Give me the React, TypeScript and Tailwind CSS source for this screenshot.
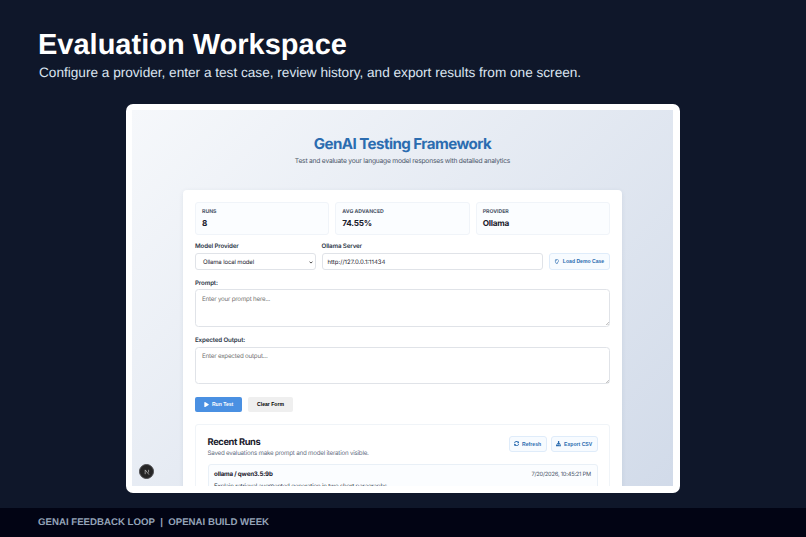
import type { ReactNode } from "react";
import { FaDownload, FaPlay, FaRegLightbulb, FaSyncAlt } from "react-icons/fa";

const stats = [
  { label: "RUNS", value: "8" },
  { label: "AVG ADVANCED", value: "74.55%" },
  { label: "PROVIDER", value: "Ollama" },
];

function StatCard({ label, value }: { label: string; value: string }) {
  return (
    <div className="h-[32.5px] rounded-[3px] border border-[#f0f4f9] bg-[#fbfdff] px-[6px] pt-[6px]">
      <div className="text-[5.2px] leading-[7px] font-bold tracking-[-0.02px] text-[#4a5568]">{label}</div>
      <div className="mt-[1.5px] text-[8.2px] leading-[10px] font-bold tracking-[-0.25px] text-[#1a202c]">
        {value}
      </div>
    </div>
  );
}

function FieldLabel({ children }: { children: ReactNode }) {
  return (
    <div className="pt-px text-[6.2px] leading-[7px] font-semibold tracking-[-0.13px] text-[#2d3748]">
      {children}
    </div>
  );
}

function GhostButton({ className, children }: { className: string; children: ReactNode }) {
  return (
    <button
      className={`flex items-center justify-center rounded-[3px] border border-[#dfecfa] bg-[#f7fbff] font-['Liberation_Sans',sans-serif] text-[5.1px] leading-[7px] font-bold whitespace-nowrap text-[#2b6cb0] ${className}`}
    >
      {children}
    </button>
  );
}

function TextBox({ label, hint }: { label: string; hint: string }) {
  return (
    <div>
      <FieldLabel>{label}</FieldLabel>
      <div className="relative mt-[2.5px] h-[37.5px] rounded-[3.5px] border border-[#e0e3e8] bg-white px-[6px] pt-[5.5px] text-[6.2px] leading-[8px] tracking-[-0.19px] text-[#6f6f6f]">
        {hint}
        <svg className="absolute right-[0.5px] bottom-[0.5px] h-[3px] w-[3px]" viewBox="0 0 3 3">
          <path d="M3 0L0 3M3 1.6L1.6 3" stroke="#888" strokeWidth="0.5" />
        </svg>
      </div>
    </div>
  );
}

function Screen() {
  return (
    <div className="relative h-[376px] w-[541px] overflow-hidden bg-linear-[135deg,#f6f8fb,#c3cfe2] bg-[length:100%_740px] font-['Inter',sans-serif]">
      <h1 className="pt-[24px] text-center text-[15.1px] leading-[20px] font-bold tracking-[-0.54px] text-[#2b6cb0]">
        GenAI Testing Framework
      </h1>
      <p className="mt-[3px] text-center text-[6.7px] leading-[9px] tracking-[-0.22px] text-[#4a5568]">
        Test and evaluate your language model responses with detailed analytics
      </p>

      <div className="mt-[24px] ml-[51px] h-[400px] w-[439px] rounded-[4px] bg-white px-[12px] pt-[12px] shadow-[0_1px_5px_rgba(30,50,90,0.08)]">
        <div className="grid grid-cols-3 gap-[6px]">
          {stats.map((s) => (
            <StatCard key={s.label} label={s.label} value={s.value} />
          ))}
        </div>

        {/* Provider row */}
        <div className="mt-[7.5px] flex items-end gap-[6px]">
          <div className="w-[120.5px]">
            <FieldLabel>Model Provider</FieldLabel>
            <div className="mt-[3px] flex h-[17px] items-center justify-between rounded-[3px] border border-[#e0e3e8] pt-px pr-[1.5px] pl-[7px] text-[6px] tracking-[-0.15px] text-[#1a202c]">
              Ollama local model
              <svg className="h-[3px] w-[4px]" viewBox="0 0 4 3">
                <path d="M0.5 0.6L2 2.1L3.5 0.6" fill="none" stroke="#222" strokeWidth="0.8" />
              </svg>
            </div>
          </div>
          <div className="flex-1">
            <FieldLabel>Ollama Server</FieldLabel>
            <div className="mt-[3px] flex h-[17px] items-center rounded-[3px] border border-[#e0e3e8] px-[5px] pt-px text-[6px] text-[#1a202c]">
              http://127.0.0.1:11434
            </div>
          </div>
          <GhostButton className="h-[17px] w-[61.5px] gap-[3px]">
            <FaRegLightbulb className="text-[5.5px]" />
            Load Demo Case
          </GhostButton>
        </div>

        <div className="mt-[8.5px] flex flex-col gap-[9.5px]">
          <TextBox label="Prompt:" hint="Enter your prompt here..." />
          <TextBox label="Expected Output:" hint="Enter expected output..." />
        </div>

        <div className="mt-[13px] flex gap-[6px] font-['Liberation_Sans',sans-serif] text-[5.1px] font-bold">
          <button className="flex h-[15px] w-[47px] items-center justify-center gap-[3px] rounded-[2px] bg-[#4a90e2] text-white">
            <FaPlay className="text-[5.2px]" />
            Run Test
          </button>
          <button className="h-[15px] w-[45px] rounded-[2px] bg-[#efefef] text-black">Clear Form</button>
        </div>

        {/* Recent runs */}
        <div className="mt-[12px] h-[120px] rounded-[3px] border border-[#f0f4f8] px-[11.5px] pt-[11px]">
          <div className="flex items-start justify-between">
            <div className="pt-px">
              <h2 className="text-[9.3px] leading-[12px] font-bold tracking-[-0.36px] text-[#1a202c]">
                Recent Runs
              </h2>
              <p className="pt-px text-[6.2px] leading-[7px] tracking-[-0.21px] text-[#5f6c80]">
                Saved evaluations make prompt and model iteration visible.
              </p>
            </div>
            <div className="flex gap-[4px]">
              <GhostButton className="h-[16px] w-[38px] gap-[3px]">
                <FaSyncAlt className="text-[5.2px]" />
                Refresh
              </GhostButton>
              <GhostButton className="h-[16px] w-[47px] gap-[3px]">
                <FaDownload className="text-[5.2px]" />
                Export CSV
              </GhostButton>
            </div>
          </div>
          <div className="mt-[6.5px] h-[60px] rounded-[3px] border border-[#e9f0f7] bg-[#fbfdff] px-[5.5px] pt-[6px]">
            <div className="flex justify-between leading-[8px]">
              <span className="text-[6.2px] font-bold tracking-[-0.16px] text-[#1a202c]">ollama / qwen3.5:9b</span>
              <span className="text-[5.7px] tracking-[-0.2px] text-[#4a5568]">7/20/2026, 10:45:21 PM</span>
            </div>
            <p className="mt-[4px] text-[6.1px] leading-[8px] tracking-[-0.16px] text-[#2d3748]">
              Explain retrieval augmented generation in two short paragraphs.
            </p>
          </div>
        </div>
      </div>

      {/* Dev tools badge */}
      <div className="absolute bottom-[7px] left-[7px] flex h-[15px] w-[15px] items-center justify-center rounded-full border border-[#4b4b4e] bg-[#252525]">
        <svg className="h-[6px] w-[6px]" viewBox="0 0 6 6" fill="none" stroke="#ddd" strokeWidth="0.6">
          <path d="M1.2 5.2V0.9L5 5.6M4.6 0.8V3.5" />
        </svg>
      </div>
    </div>
  );
}

export default function App() {
  return (
    <div className="flex h-[537px] w-[806px] flex-col overflow-hidden bg-[#0f172a] font-['Liberation_Sans',sans-serif] [text-rendering:geometricPrecision]">
      <header className="h-[103.5px] shrink-0 pt-[27px] pl-[38px]">
        <h1 className="text-[29px] leading-[36px] font-bold text-white">Evaluation Workspace</h1>
        <p className="mt-[1.6px] pl-[1px] text-[13.62px] leading-[16px] text-[#dbe4f0]">
          Configure a provider, enter a test case, review history, and export results from one screen.
        </p>
      </header>
      <main className="flex-1 pl-[125.5px]">
        <div className="h-[389.5px] w-[554.5px] rounded-[7px] bg-white pt-[6.5px] pl-[6.5px]">
          <Screen />
        </div>
      </main>
      <footer className="flex h-[29px] shrink-0 items-center bg-[#020414] pt-px pl-[38px] text-[9.67px] font-bold whitespace-pre text-[#94a3b8]">
        GENAI FEEDBACK LOOP  |  OPENAI BUILD WEEK
      </footer>
    </div>
  );
}
